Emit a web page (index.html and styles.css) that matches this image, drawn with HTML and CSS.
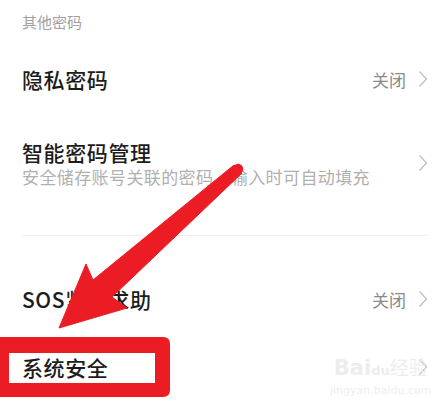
FILE: index.html
```html
<!DOCTYPE html>
<html lang="zh-CN">
<head>
  <meta charset="UTF-8">
  <title>其他密码</title>
  <link rel="stylesheet" href="styles.css">
</head>
<body>

<div class="page">
  <div class="section-title">其他密码</div>

  <div class="row row-1">
    <div class="row-text"><div class="title">隐私密码</div></div>
    <div class="row-end">
      <span class="value">关闭</span>
      <svg class="chev" width="10" height="18" viewBox="0 0 10 18"><polyline points="1.5,1.5 8.5,9 1.5,16.5"/></svg>
    </div>
  </div>

  <div class="row row-2">
    <div class="row-text">
      <div class="title">智能密码管理</div>
      <div class="sub">安全储存账号关联的密码，输入时可自动填充</div>
    </div>
    <div class="row-end">
      <svg class="chev" width="10" height="18" viewBox="0 0 10 18"><polyline points="1.5,1.5 8.5,9 1.5,16.5"/></svg>
    </div>
  </div>

  <div class="divider"></div>

  <div class="row row-3">
    <div class="row-text"><div class="title">SOS紧急求助</div></div>
    <div class="row-end">
      <span class="value">关闭</span>
      <svg class="chev" width="10" height="18" viewBox="0 0 10 18"><polyline points="1.5,1.5 8.5,9 1.5,16.5"/></svg>
    </div>
  </div>

  <div class="row row-4">
    <div class="row-text"><div class="title">系统安全</div></div>
    <div class="row-end">
      <svg class="chev" width="10" height="18" viewBox="0 0 10 18"><polyline points="1.5,1.5 8.5,9 1.5,16.5"/></svg>
    </div>
  </div>
</div>

<div class="watermark">
  <div class="wm-logo">Bai<span class="wm-du">du</span><span class="wm-cn">经验</span></div>
  <div class="wm-url">jingyan.baidu.com</div>
</div>

<svg class="marks" width="448" height="406" viewBox="0 0 448 406">
  <!-- arrow -->
  <path class="red" d="M234 165 L93 280 L86 264 L59 328 L127 308 L112 297 L242 173 Z"/>
  <circle class="red-fill" cx="238" cy="169" r="5.2"/>
  <!-- box around 系统安全 -->
  <path class="red-fill" fill-rule="evenodd"
        d="M-4 337 H163 Q170 337 170 344 V390 Q170 397 163 397 H-4 Z M9 353 V383 H155 V353 Z"/>
</svg>

</body>
</html>
```

FILE: styles.css
```css
* { box-sizing: border-box; }
body {
  margin: 0;
  background: #fff;
  font-family: "Noto Sans CJK SC", "Noto Sans", sans-serif;
  color: #1c1c1c;
  overflow: hidden;
}
.page {
  padding: 0 20px 0 22px;
  position: relative;
}
.section-title {
  height: 42px;
  display: flex;
  align-items: center;
  font-size: 15px;
  color: #a0a0a0;
}
.row {
  display: flex;
  align-items: center;
  justify-content: space-between;
}
.row-1 { height: 74px; }
.row-2 { height: 94px; }
.row-3 { height: 68px; margin-top: 29px; }
.row-4 { height: 68px; }
.title {
  font-size: 21px;
  font-weight: 500;
  letter-spacing: 0.6px;
  line-height: 28px;
}
.sub {
  font-size: 17px;
  letter-spacing: 0.4px;
  color: #b0b0b0;
  line-height: 22px;
}
.row-end {
  display: flex;
  align-items: center;
  gap: 12px;
}
.value {
  font-size: 17px;
  color: #8a8a8a;
}
.chev polyline {
  fill: none;
  stroke: #c2c2c2;
  stroke-width: 1.4;
}
.divider {
  height: 1px;
  background: #efefef;
  margin-top: 25px;
}
.watermark {
  position: absolute;
  left: 330px;
  top: 354px;
  text-align: center;
  color: #ededed;
}
.wm-logo {
  font-family: "DejaVu Sans", sans-serif;
  font-size: 21px;
  font-weight: bold;
  line-height: 26px;
}
.wm-du { font-size: 13px; }
.wm-cn {
  font-family: "Noto Sans CJK SC", sans-serif;
  font-size: 19px;
  font-weight: normal;
  color: #ededed;
}
.wm-url {
  font-family: "DejaVu Sans", sans-serif;
  font-size: 11px;
  line-height: 14px;
  color: #eeeeee;
}
.marks {
  position: absolute;
  top: 0;
  left: 0;
  pointer-events: none;
}
.red {
  fill: #ec1c24;
  stroke: #ec1c24;
  stroke-width: 1;
  stroke-linejoin: round;
}
.red-fill { fill: #ec1c24; }
```
